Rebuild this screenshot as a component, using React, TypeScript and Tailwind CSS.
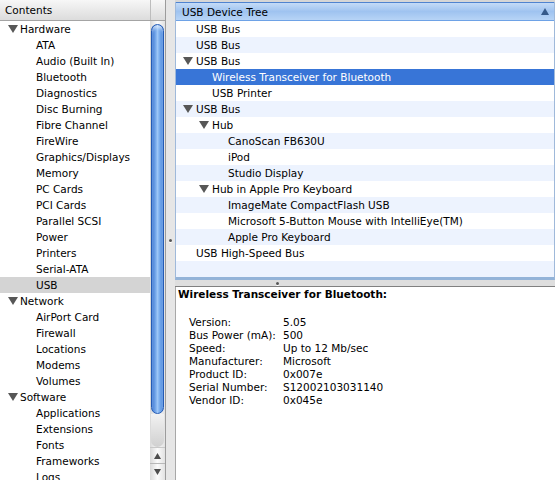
import React from "react";

function Tri() {
  return (
    <svg width="10" height="8" viewBox="0 0 10 8" className="shrink-0">
      <polygon points="0,0 10,0 5,8" fill="#575757" />
    </svg>
  );
}

type LeftItem = { t: string; h?: boolean; sel?: boolean };
const leftItems: LeftItem[] = [
  { t: "Hardware", h: true },
  { t: "ATA" },
  { t: "Audio (Built In)" },
  { t: "Bluetooth" },
  { t: "Diagnostics" },
  { t: "Disc Burning" },
  { t: "Fibre Channel" },
  { t: "FireWire" },
  { t: "Graphics/Displays" },
  { t: "Memory" },
  { t: "PC Cards" },
  { t: "PCI Cards" },
  { t: "Parallel SCSI" },
  { t: "Power" },
  { t: "Printers" },
  { t: "Serial-ATA" },
  { t: "USB", sel: true },
  { t: "Network", h: true },
  { t: "AirPort Card" },
  { t: "Firewall" },
  { t: "Locations" },
  { t: "Modems" },
  { t: "Volumes" },
  { t: "Software", h: true },
  { t: "Applications" },
  { t: "Extensions" },
  { t: "Fonts" },
  { t: "Frameworks" },
  { t: "Logs" },
];

type TreeItem = { t: string; l: number; a?: boolean; sel?: boolean };
const tree: TreeItem[] = [
  { t: "USB Bus", l: 0 },
  { t: "USB Bus", l: 0 },
  { t: "USB Bus", l: 0, a: true },
  { t: "Wireless Transceiver for Bluetooth", l: 1, sel: true },
  { t: "USB Printer", l: 1 },
  { t: "USB Bus", l: 0, a: true },
  { t: "Hub", l: 1, a: true },
  { t: "CanoScan FB630U", l: 2 },
  { t: "iPod", l: 2 },
  { t: "Studio Display", l: 2 },
  { t: "Hub in Apple Pro Keyboard", l: 1, a: true },
  { t: "ImageMate CompactFlash USB", l: 2 },
  { t: "Microsoft 5-Button Mouse with IntelliEye(TM)", l: 2 },
  { t: "Apple Pro Keyboard", l: 2 },
  { t: "USB High-Speed Bus", l: 0 },
  { t: "", l: 0 },
];

const details: [string, string][] = [
  ["Version:", "5.05"],
  ["Bus Power (mA):", "500"],
  ["Speed:", "Up to 12 Mb/sec"],
  ["Manufacturer:", "Microsoft"],
  ["Product ID:", "0x007e"],
  ["Serial Number:", "S12002103031140"],
  ["Vendor ID:", "0x045e"],
];

export default function App() {
  return (
    <div className="w-[555px] h-[480px] overflow-hidden flex bg-[#e6e6e6] text-[10.5px] text-black font-['DejaVu_Sans',sans-serif]">
      {/* Left panel */}
      <div className="w-[166px] h-full flex flex-col bg-white border-r border-[#9c9c9c] shrink-0">
        <div className="h-[21px] flex border-b border-[#a4a4a4] bg-gradient-to-b from-[#f7f7f7] to-[#dcdcdc] shrink-0">
          <div className="w-[151px] border-r border-[#bdbdbd] pl-[5px] pt-[2px] flex items-center">Contents</div>
          <div className="flex-1" />
        </div>
        <div className="flex-1 flex min-h-0">
          <div className="w-[151px] flex flex-col overflow-hidden">
            {leftItems.map((it, i) => (
              <div
                key={i}
                className={
                  "h-[16px] shrink-0 flex items-center whitespace-nowrap " +
                  (it.h ? "pl-[8px] gap-[2px] " : "pl-[36px] pt-[1px] ") +
                  (it.sel ? "bg-[#d4d4d4]" : "")
                }
              >
                {it.h && <Tri />}
                <span className={it.h ? "pt-[1px]" : ""}>{it.t}</span>
              </div>
            ))}
          </div>
          {/* Scrollbar */}
          <div className="w-[15px] flex flex-col bg-gradient-to-r from-[#d9d9d9] via-[#fbfbfb] to-[#e2e2e2]">
            <div className="h-[3px] shrink-0" />
            <div className="h-[390px] shrink-0 mx-[1px] rounded-full border border-[#245bb5] bg-gradient-to-r from-[#2f6fd0] via-[#9cc6f7] to-[#3f80da] shadow-[inset_0_3px_3px_rgba(255,255,255,0.55)]" />
            <div className="flex-1 mx-[1px] rounded-b-full bg-gradient-to-b from-[#f2f2f2] to-[#d0d0d0]" />
            <div className="h-[16px] shrink-0 flex items-center justify-center border-t border-[#c8c8c8]">
              <svg width="7" height="6" viewBox="0 0 7 6">
                <polygon points="3.5,0 7,6 0,6" fill="#4d4d4d" />
              </svg>
            </div>
            <div className="h-[17px] shrink-0 flex items-center justify-center border-t border-[#b8b8b8]">
              <svg width="7" height="6" viewBox="0 0 7 6">
                <polygon points="0,0 7,0 3.5,6" fill="#4d4d4d" />
              </svg>
            </div>
          </div>
        </div>
      </div>

      {/* Vertical splitter */}
      <div className="w-[9px] h-full shrink-0 flex items-center justify-center">
        <div className="w-[3px] h-[3px] rounded-full bg-[#555] shadow-[0_1px_0_#fff]" />
      </div>

      {/* Right side */}
      <div className="flex-1 h-full flex flex-col min-w-0">
        <div className="h-[2px] shrink-0 bg-[#d6d6d6]" />
        {/* Tree pane */}
        <div className="shrink-0 flex flex-col border-l border-r border-b-[3px] border-l-[#9fb9da] border-r-[#9fb9da] border-b-[#93b3d8] bg-white">
          <div className="h-[19px] shrink-0 flex items-center justify-between pl-[6px] pr-[5px] border-t border-b border-t-[#4f83d0] border-b-[#6ea2e6] bg-gradient-to-b from-[#c4dbf7] via-[#9fc3f0] to-[#b7d4f6]">
            <span className="pt-[2px]">USB Device Tree</span>
            <svg width="8" height="7" viewBox="0 0 8 7">
              <polygon points="4,0 8,7 0,7" fill="#35598a" />
            </svg>
          </div>
          {tree.map((it, i) => (
            <div
              key={i}
              className={
                "h-[16px] shrink-0 flex items-center gap-[3px] whitespace-nowrap " +
                (it.sel ? "bg-[#3875d7] text-white " : i % 2 === 1 ? "bg-[#edf3fe] " : "bg-white ")
              }
              style={{ paddingLeft: (it.a ? 7 : 20) + 16 * it.l }}
            >
              {it.a && <Tri />}
              <span className="pt-[1px]">{it.t}</span>
            </div>
          ))}
        </div>
        {/* Horizontal splitter */}
        <div className="h-[7px] shrink-0 bg-[#dedede] border-b border-[#808080] flex items-center pl-[101px]">
          <div className="w-[3px] h-[3px] rounded-full bg-[#555] shadow-[0_1px_0_#fff]" />
        </div>
        {/* Details pane */}
        <div className="flex-1 bg-white border-l border-[#a8a8a8] pl-[2px] pt-[1px] leading-[13px]">
          <div className="font-bold h-[13px]">Wireless Transceiver for Bluetooth:</div>
          <div className="mt-[15px] pl-[11px] flex flex-col">
            {details.map(([k, v]) => (
              <div key={k} className="h-[13px] flex whitespace-nowrap">
                <span className="w-[94px] shrink-0">{k}</span>
                <span>{v}</span>
              </div>
            ))}
          </div>
        </div>
      </div>
    </div>
  );
}
